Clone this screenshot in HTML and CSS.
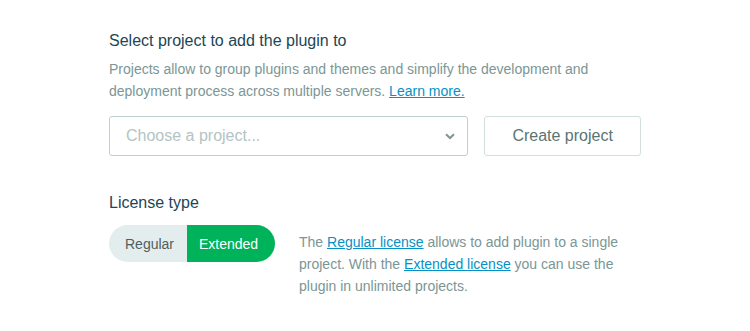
FILE: index.html
```html
<!DOCTYPE html>
<html lang="en">
<head>
  <meta charset="UTF-8">
  <meta name="viewport" content="width=device-width, initial-scale=1.0">
  <title>Add plugin to project</title>
  <link rel="stylesheet" href="styles.css">
</head>
<body>
  <div class="panel">
    <h3>Select project to add the plugin to</h3>
    <p class="hint">Projects allow to group plugins and themes and simplify the development and deployment process across multiple servers. <a href="#">Learn more.</a></p>

    <div class="project-row">
      <div class="select">
        <span class="placeholder">Choose a project...</span>
        <svg class="chevron" width="10" height="7" viewBox="0 0 10 7"><path d="M1 1.2 L5 5 L9 1.2" fill="none" stroke="#7d9797" stroke-width="2"/></svg>
      </div>
      <button class="create-btn">Create project</button>
    </div>

    <h3 class="license-title">License type</h3>
    <div class="license-row">
      <div class="toggle">
        <span class="opt">Regular</span>
        <span class="opt active">Extended</span>
      </div>
      <p class="hint license-note">The <a href="#">Regular license</a> allows to add plugin to a single project. With the <a href="#">Extended license</a> you can use the plugin in unlimited projects.</p>
    </div>
  </div>
</body>
</html>
```

FILE: styles.css
```css
body {
  font-family: "Liberation Sans", Arial, sans-serif;
  margin: 0;
  background: #fff;
}
.panel {
  padding: 30px 0 0 109px;
  width: 532px;
}
h3 {
  font-size: 16px;
  font-weight: normal;
  color: #1b4656;
  margin: 0;
  line-height: 22px;
}
.hint {
  font-size: 14px;
  line-height: 22px;
  color: #7b9696;
  margin: 6px 0 0;
}
.hint a {
  color: #0591c3;
}
.project-row {
  display: flex;
  gap: 16px;
  margin-top: 14px;
}
.select {
  box-sizing: border-box;
  width: 360px;
  height: 40px;
  border: 1px solid #bfd0d0;
  border-radius: 3px;
  display: flex;
  align-items: center;
  justify-content: space-between;
  padding: 0 12px 0 16px;
}
.placeholder {
  font-size: 16px;
  color: #b3c4c4;
}
.create-btn {
  box-sizing: border-box;
  width: 157px;
  height: 40px;
  background: #fff;
  border: 1px solid #d3dfdf;
  border-radius: 3px;
  font-family: inherit;
  font-size: 16px;
  color: #5b7474;
  cursor: pointer;
}
.license-title {
  margin-top: 36px;
}
.license-row {
  display: flex;
  gap: 24px;
  margin-top: 11px;
}
.toggle {
  display: flex;
  height: 37px;
  border-radius: 19px;
  overflow: hidden;
  flex-shrink: 0;
}
.opt {
  display: flex;
  align-items: center;
  padding: 0 14px 0 16px;
  font-size: 14px;
  background: #e4edee;
  color: #4f5f5e;
  width: 48px;
}
.opt.active {
  background: #00b259;
  color: #fff;
  padding: 0 16px 0 12px;
  width: 60px;
}
.license-note {
  margin: 6px 0 0;
  width: 330px;
}
```
